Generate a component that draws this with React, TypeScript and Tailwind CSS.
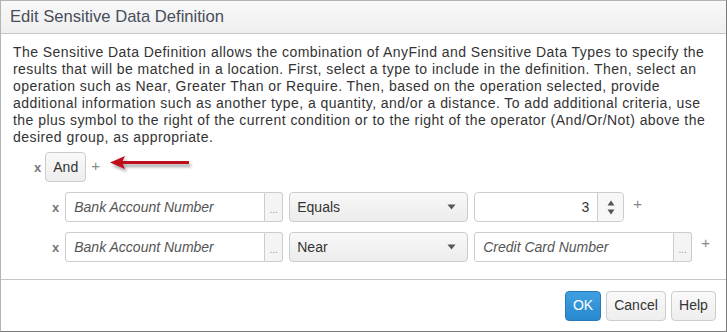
import { ReactNode } from "react";

const font = { fontFamily: '"Liberation Sans", Arial, sans-serif' };

const intro = [
    "The Sensitive Data Definition allows the combination of AnyFind and Sensitive Data Types to specify the",
    "results that will be matched in a location. First, select a type to include in the definition. Then, select an",
    "operation such as Near, Greater Than or Require. Then, based on the operation selected, provide",
    "additional information such as another type, a quantity, and/or a distance. To add additional criteria, use",
    "the plus symbol to the right of the current condition or to the right of the operator (And/Or/Not) above the",
    "desired group, as appropriate.",
];

function Plus({ className = "" }: { className?: string }) {
    return <span className={`text-[15px] text-[#888] leading-none ${className}`}>+</span>;
}

function Remove() {
    return <span className="text-[13px] font-bold text-[#777] leading-none">x</span>;
}

function TypeInput({ value, width }: { value: string; width: string }) {
    return (
        <div className={`flex h-[30px] ${width}`}>
            <div className="flex-1 flex items-center border border-[#ccc] rounded-l-[3px] pl-[8px] text-[14px] italic text-[#555] bg-white">
                {value}
            </div>
            <div className="w-[18px] flex items-end justify-center pb-[6px] border border-l-0 border-[#ccc] rounded-r-[3px] bg-[#f4f4f4] text-[10px] text-[#999] leading-none">
                ...
            </div>
        </div>
    );
}

function Select({ value }: { value: string }) {
    return (
        <div className="w-[179px] h-[30px] flex items-center justify-between px-[7px] border border-[#ccc] rounded-[4px] bg-gradient-to-b from-[#f8f8f8] to-[#ececec] text-[14px] text-[#333]">
            <span>{value}</span>
            <svg width="9" height="6" viewBox="0 0 9 6" className="mr-[4px]">
                <path d="M0.5 0.5 L8.5 0.5 L4.5 5.5 Z" fill="#555" />
            </svg>
        </div>
    );
}

function NumberInput({ value }: { value: string }) {
    return (
        <div className="w-[150px] h-[30px] flex border border-[#ccc] rounded-[4px] bg-white">
            <div className="flex-1 flex items-center justify-end pr-[8px] text-[14px] text-[#333]">{value}</div>
            <div className="w-[26px] flex flex-col items-center justify-center gap-[3px] border-l border-[#ccc] bg-[#f7f7f7] rounded-r-[4px]">
                <svg width="8" height="6" viewBox="0 0 8 6">
                    <path d="M4 0.5 L7.5 5.5 L0.5 5.5 Z" fill="#555" />
                </svg>
                <svg width="8" height="6" viewBox="0 0 8 6">
                    <path d="M0.5 0.5 L7.5 0.5 L4 5.5 Z" fill="#555" />
                </svg>
            </div>
        </div>
    );
}

function Row({ children }: { children: ReactNode }) {
    return <div className="flex items-center gap-[6px] pl-[39px]">{children}</div>;
}

function Button({ label, width, primary }: { label: string; width: string; primary?: boolean }) {
    return (
        <div
            className={`h-[30px] ${width} flex items-center justify-center rounded-[4px] border text-[14px] ${
                primary
                    ? "bg-gradient-to-b from-[#3fa0e0] to-[#2a88cf] border-[#2a78b8] text-white"
                    : "bg-gradient-to-b from-[#f9f9f9] to-[#eeeeee] border-[#ccc] text-[#333]"
            }`}
        >
            {label}
        </div>
    );
}

export default function App() {
    return (
        <div style={font} className="w-[727px] h-[332px] bg-white border border-[#b4b4b4] border-r-[#7a7a7a] border-b-[#7a7a7a] flex flex-col overflow-hidden">
            <div className="h-[33px] flex items-center pl-[9px] bg-gradient-to-b from-[#f8f8f8] to-[#efefef] border-b border-[#c6c6c6] text-[16.6px] text-[#474e5a]">
                Edit Sensitive Data Definition
            </div>
            <div className="flex-1 pt-[10px] px-[12px]">
                <div className="text-[14px] leading-[17px] tracking-[0.45px] text-[#333] whitespace-nowrap">
                    {intro.map((line) => (
                        <div key={line}>{line}</div>
                    ))}
                </div>
                <div className="flex items-center mt-[6px] pl-[21px]">
                    <Remove />
                    <div className="ml-[4px] h-[30px] w-[41px] flex items-center justify-center rounded-[4px] border border-[#ccc] bg-gradient-to-b from-[#f9f9f9] to-[#eeeeee] text-[14px] text-[#333]">
                        And
                    </div>
                    <Plus className="ml-[5px] -mt-[3px]" />
                    <svg width="86" height="20" viewBox="0 0 86 20" className="ml-[9px] -mt-[4px]">
                        <defs>
                            <filter id="sh" x="-10%" y="-50%" width="130%" height="250%">
                                <feDropShadow dx="2" dy="3" stdDeviation="1.6" floodColor="#000" floodOpacity="0.35" />
                            </filter>
                        </defs>
                        <g filter="url(#sh)">
                            <path d="M1 7.5 L16 1 L13 7.5 L16 14 Z" fill="#c00a1a" />
                            <rect x="12" y="6" width="68" height="3" fill="#c00a1a" />
                        </g>
                    </svg>
                </div>
                <div className="flex flex-col gap-[10px] mt-[10px]">
                    <Row>
                        <Remove />
                        <TypeInput value="Bank Account Number" width="w-[218px]" />
                        <Select value="Equals" />
                        <NumberInput value="3" />
                        <Plus className="ml-[3px] -mt-[8px]" />
                    </Row>
                    <Row>
                        <Remove />
                        <TypeInput value="Bank Account Number" width="w-[218px]" />
                        <Select value="Near" />
                        <TypeInput value="Credit Card Number" width="w-[218px]" />
                        <Plus className="ml-[3px] -mt-[10px]" />
                    </Row>
                </div>
            </div>
            <div className="h-[52px] border-t border-[#c6c6c6] flex items-center justify-end gap-[5px] pr-[10px]">
                <Button label="OK" width="w-[36px]" primary />
                <Button label="Cancel" width="w-[60px]" />
                <Button label="Help" width="w-[45px]" />
            </div>
        </div>
    );
}
